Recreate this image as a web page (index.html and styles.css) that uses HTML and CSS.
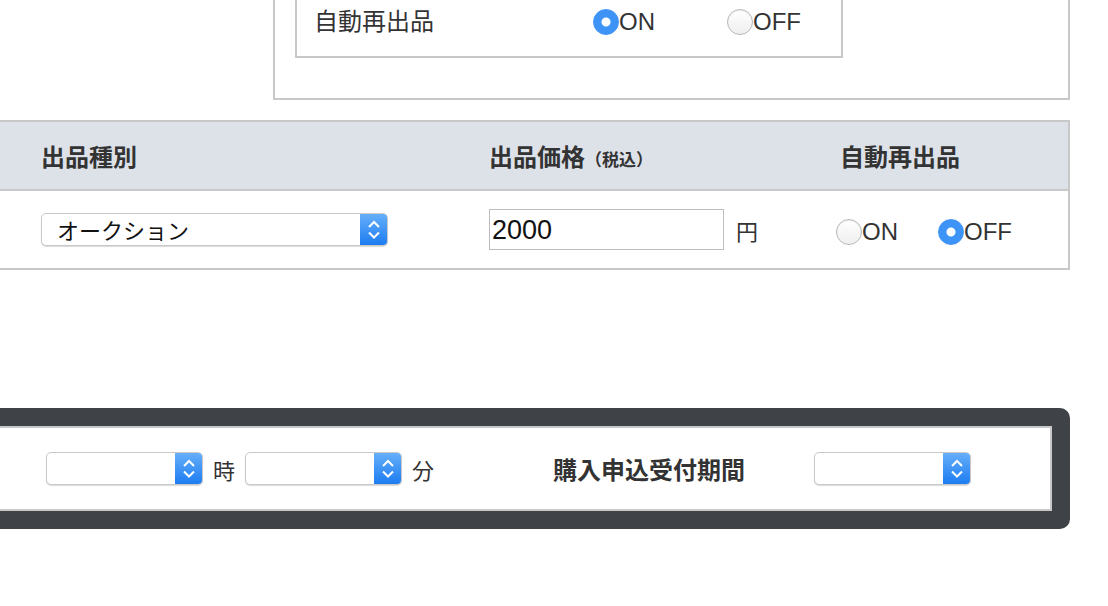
FILE: index.html
```html
<!DOCTYPE html>
<html lang="ja">
<head>
    <meta charset="UTF-8">
    <title>出品設定</title>
    <link rel="stylesheet" href="styles.css">
</head>
<body>
    <div class="auto-box">
        <div class="auto-inner">
            <div class="auto-row">
                <span class="auto-label">自動再出品</span>
                <span class="radio"><span class="dot on"></span>ON</span>
                <span class="radio"><span class="dot"></span>OFF</span>
            </div>
        </div>
    </div>

    <div class="listing">
        <div class="listing-head">
            <div class="col-type">出品種別</div>
            <div class="col-price">出品価格<small>（税込）</small></div>
            <div class="col-auto head-auto">自動再出品</div>
        </div>
        <div class="listing-row">
            <div class="col-type">
                <div class="select type-select">
                    <span class="select-text">オークション</span>
                    <span class="select-arrow">
                        <svg width="28" height="33" viewBox="0 0 28 33"><polyline points="9,14 14,9 19,14" fill="none" stroke="#fff" stroke-width="2"/><polyline points="9,19.5 14,24.5 19,19.5" fill="none" stroke="#fff" stroke-width="2"/></svg>
                    </span>
                </div>
            </div>
            <div class="col-price price-cell">
                <input class="price-input" type="text" value="2000">
                <span class="yen">円</span>
            </div>
            <div class="col-auto radios">
                <span class="radio"><span class="dot"></span>ON</span>
                <span class="radio"><span class="dot on"></span>OFF</span>
            </div>
        </div>
    </div>

    <div class="deadline">
        <div class="deadline-inner">
            <div class="select small-select">
                <span class="select-text"></span>
                <span class="select-arrow">
                    <svg width="28" height="33" viewBox="0 0 28 33"><polyline points="9,14 14,9 19,14" fill="none" stroke="#fff" stroke-width="2"/><polyline points="9,19.5 14,24.5 19,19.5" fill="none" stroke="#fff" stroke-width="2"/></svg>
                </span>
            </div>
            <span class="unit">時</span>
            <div class="select small-select">
                <span class="select-text"></span>
                <span class="select-arrow">
                    <svg width="28" height="33" viewBox="0 0 28 33"><polyline points="9,14 14,9 19,14" fill="none" stroke="#fff" stroke-width="2"/><polyline points="9,19.5 14,24.5 19,19.5" fill="none" stroke="#fff" stroke-width="2"/></svg>
                </span>
            </div>
            <span class="unit">分</span>
            <span class="period-label">購入申込受付期間</span>
            <div class="select small-select period-select">
                <span class="select-text"></span>
                <span class="select-arrow">
                    <svg width="28" height="33" viewBox="0 0 28 33"><polyline points="9,14 14,9 19,14" fill="none" stroke="#fff" stroke-width="2"/><polyline points="9,19.5 14,24.5 19,19.5" fill="none" stroke="#fff" stroke-width="2"/></svg>
                </span>
            </div>
        </div>
    </div>
</body>
</html>
```

FILE: styles.css
```css
* {
    box-sizing: border-box;
}
body {
    margin: 0;
    background: #fff;
    color: #333;
    font-family: "Liberation Sans", "Noto Sans CJK JP", sans-serif;
    font-size: 24px;
}
.auto-label,
.listing-head,
.yen,
.unit,
.period-label {
    font-family: "Noto Sans CJK JP", sans-serif;
}

/* top auto relist box */
.auto-box {
    margin-left: 273px;
    width: 797px;
    border: 2px solid #c8c8c8;
    border-top: none;
    padding: 0 20px 40px;
}
.auto-inner {
    width: 548px;
    border: 2px solid #c8c8c8;
    border-top: none;
    padding: 0 0 12px 17px;
}
.auto-row {
    display: grid;
    grid-template-columns: 279px 134px auto;
    align-items: center;
    height: 44px;
}
.auto-label {
    line-height: 1;
    padding-bottom: 4px;
}

/* radios */
.radio {
    display: inline-flex;
    align-items: center;
    line-height: 1;
}
.dot {
    width: 26px;
    height: 26px;
    border-radius: 50%;
    border: 1px solid #b8b8b8;
    background: linear-gradient(#fff, #efefef);
    box-shadow: inset 0 1px 1px rgba(0,0,0,0.08);
}
.dot.on {
    border-color: #3d93f6;
    background: radial-gradient(circle, #fff 0 4px, #3d93f6 5px);
    box-shadow: none;
}

/* listing table */
.listing {
    width: 1070px;
    margin-top: 20px;
    border: 2px solid #c8c8c8;
    border-left: none;
}
.listing-head,
.listing-row {
    display: grid;
    grid-template-columns: 470px 350px 1fr;
    align-items: center;
}
.listing-head {
    height: 69px;
    background: #dde1e8;
    border-bottom: 2px solid #c8c8c8;
    font-weight: bold;
    line-height: 1;
}
.listing-head small {
    font-size: 17px;
}
.listing-row {
    height: 77px;
}
.col-type {
    padding-left: 41px;
}
.col-price {
    padding-left: 19px;
}
.col-auto {
    padding-left: 16px;
}
.head-auto {
    padding-left: 20px;
}
.price-cell {
    display: flex;
    align-items: center;
}
.price-input {
    width: 235px;
    height: 41px;
    border: 1px solid #bdbdbd;
    padding: 2px 2px 0;
    font-family: "Liberation Sans", sans-serif;
    font-size: 27px;
    color: #111;
}
.yen {
    margin-left: 12px;
    font-size: 22px;
    line-height: 1;
}
.radios {
    display: flex;
    align-items: center;
    gap: 40px;
    padding-top: 4px;
}

/* select boxes */
.select {
    display: flex;
    height: 33px;
    border: 1px solid #c9c9c9;
    border-radius: 5px;
    background: #fff;
    box-shadow: 0 1px 1px rgba(0,0,0,0.15);
    overflow: hidden;
}
.type-select {
    width: 347px;
}
.select-text {
    flex: 1;
    padding: 3px 0 0 15px;
    font-size: 22px;
    line-height: 30px;
    color: #111;
}
.select-arrow {
    width: 28px;
    margin: -1px -1px -1px 0;
    background: linear-gradient(#68b0fa, #1b7bf1);
    display: flex;
    align-items: center;
    justify-content: center;
}

/* deadline bar */
.deadline {
    margin-top: 138px;
    width: 1070px;
    background: #3f4246;
    border-radius: 0 10px 10px 0;
    padding: 18px 18px 18px 0;
}
.deadline-inner {
    height: 85px;
    border: 2px solid #c8c8c8;
    border-left: none;
    background: #fff;
    display: flex;
    align-items: center;
    padding-left: 46px;
}
.small-select {
    width: 157px;
}
.unit {
    margin: 0 10px;
    font-size: 22px;
    line-height: 1;
}
.period-label {
    margin-left: 109px;
    font-weight: bold;
    line-height: 1;
}
.period-select {
    margin-left: 69px;
}
```
